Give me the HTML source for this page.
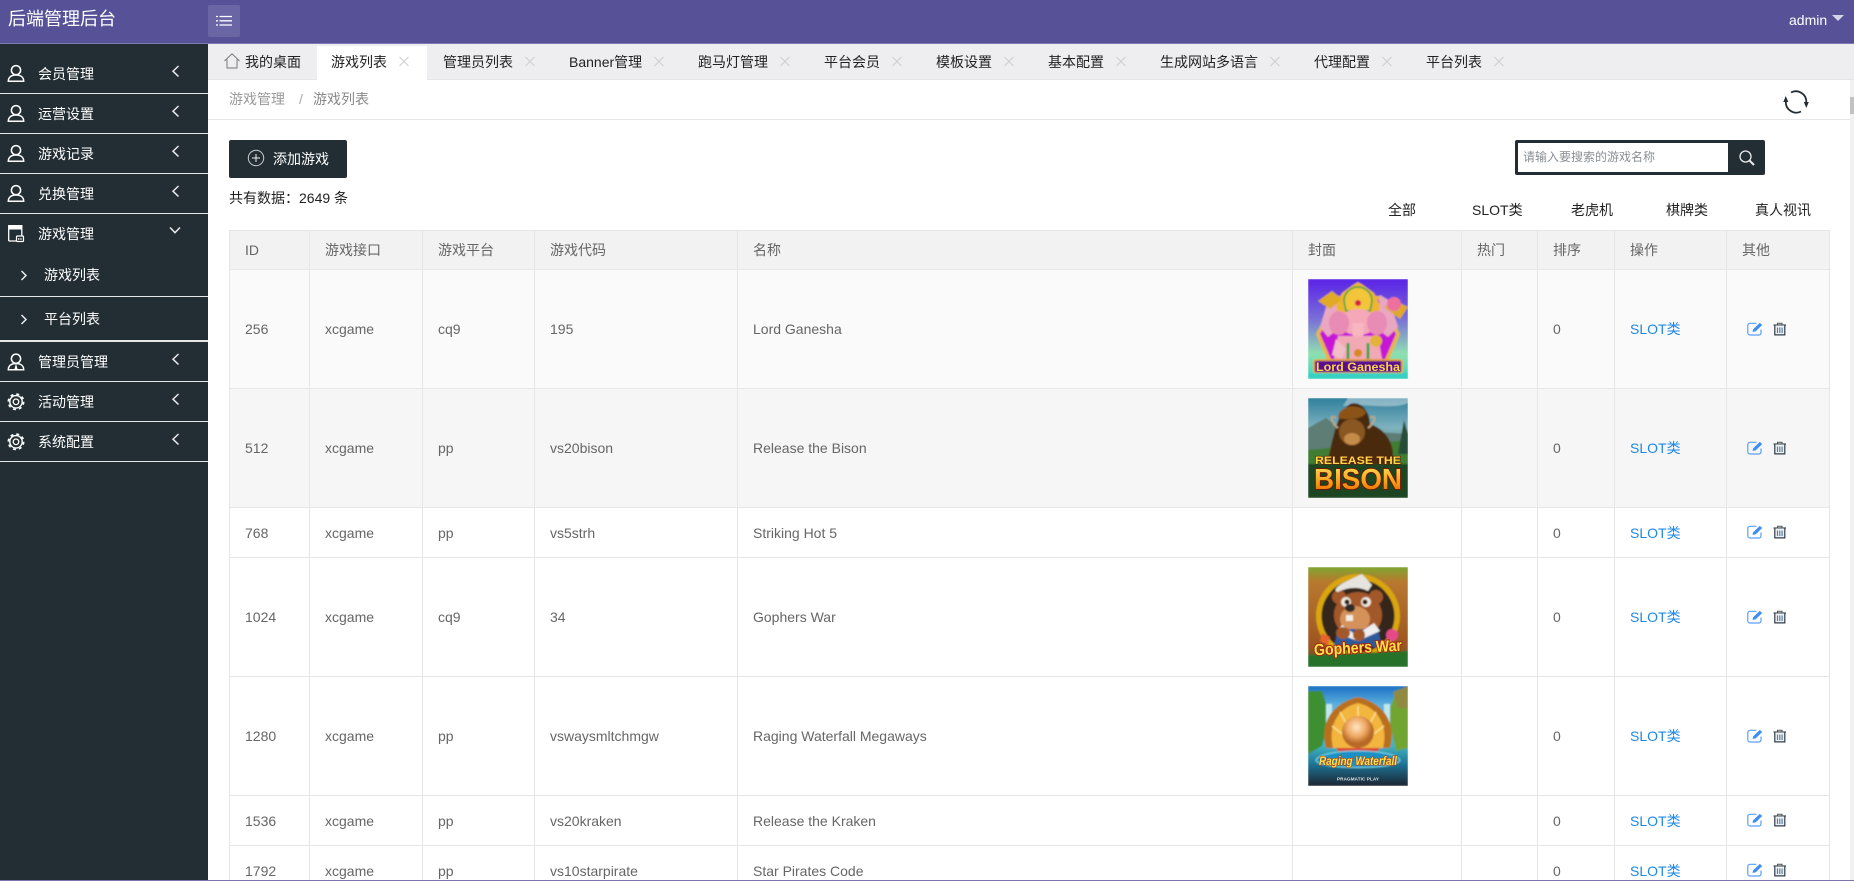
<!DOCTYPE html>
<html lang="zh-CN"><head><meta charset="utf-8"><title>后端管理后台</title>
<style>
*{box-sizing:border-box}
html,body{margin:0;padding:0;width:1854px;height:881px;overflow:hidden;background:#fff}
body{position:relative;font:14px/20px "Liberation Sans","Noto Sans CJK SC",sans-serif;color:#333}
.a{position:absolute;white-space:nowrap}
#top{left:0;top:0;width:1854px;height:44px;background:#575298;border-bottom:1px solid #7d79b4}
#side{left:0;top:44px;width:208px;height:837px;background:#232e34}
.m{position:absolute;left:38px;color:#fff;white-space:nowrap}
.l{position:absolute;left:0;width:208px;height:1px;background:#e4e6e7}
#tabs{left:208px;top:44px;width:1646px;height:36px;background:#eeeef0;border-bottom:1px solid #e4e4e6}
.tt{position:absolute;top:52px;color:#222;white-space:nowrap}
#act{left:317px;top:46px;width:110px;height:35px;background:#fff}
#crumb{left:208px;top:80px;width:1642px;height:40px;border-bottom:1px solid #e6e6e6;background:#fff}
#sb{left:1850px;top:80px;width:4px;height:800px;background:#f1f1f1}
#th{left:1850px;top:97px;width:4px;height:17px;background:#c1c1c1}
#btn{left:229px;top:140px;width:118px;height:38px;background:#232e34;border-radius:2px}
#sea{left:1515px;top:140px;width:250px;height:35px;background:#232e34;border-radius:2px}
#sea i{position:absolute;left:3px;top:3px;width:210px;height:29px;background:#fff;font:12px/29px "Liberation Sans","Noto Sans CJK SC",sans-serif;color:#8a8f94;padding-left:5px;font-style:normal}
#wrap{left:229px;top:230px;width:1601px;height:651px;overflow:hidden}
table{border-collapse:separate;border-spacing:0;table-layout:fixed;width:1601px}
th,td{padding:0 15px;border-right:1px solid #e6e6e6;border-bottom:1px solid #e6e6e6;text-align:left;font-weight:400;color:#666;overflow:hidden;white-space:nowrap}
th:first-child,td:first-child{border-left:1px solid #e6e6e6}
th{background:#f2f2f2;height:40px;border-top:1px solid #e6e6e6}
td{background:#fff}
tr.big td{height:119px}
tr.sm td{height:50px}
tr.r1 td{background:#fafafa}
tr.r2 td{background:#f6f6f6}
td .lk{color:#1e88e5}
td svg.c{display:block;width:100px;height:100px}
td svg.ic{position:relative;top:-1px;display:inline-block;vertical-align:middle}
tr.sm td svg.ic{top:-2px}
.ot{paint-order:stroke}
#bot{left:0;top:880px;width:1854px;height:1px;background:#7a76ad}
</style></head><body>

<div class="a" id="top"></div>
<div class="a" style="left:8px;top:8px;font-size:18px;line-height:22px;color:#fff">后端管理后台</div>
<div class="a" style="left:208px;top:5px;width:32px;height:32px;background:#6a66a6;border-radius:2px"></div>
<svg class="a" style="left:208px;top:5px" width="32" height="32" fill="none" stroke="#fff" stroke-width="1.3"><path d="M11.5 11.5H24M11.5 15.800H24M11.5 20H24"/><path d="M8 11.5H10M8 15.800H10M8 20H10"/></svg>
<div class="a" style="left:1789px;top:10px;color:#fff">admin</div>
<svg class="a" style="left:1832px;top:14px" width="12" height="8"><path d="M0 1H12L6 7z" fill="#d5d3e6"/></svg>

<div class="a" id="side">
 <div class="m" style="top:20px">会员管理</div><div class="l" style="top:49px"></div>
 <div class="m" style="top:60px">运营设置</div><div class="l" style="top:89px"></div>
 <div class="m" style="top:100px">游戏记录</div><div class="l" style="top:129px"></div>
 <div class="m" style="top:140px">兑换管理</div><div class="l" style="top:169px"></div>
 <div class="m" style="top:180px">游戏管理</div>
 <div class="m" style="top:221px;left:44px">游戏列表</div><div class="l" style="top:252px"></div>
 <div class="m" style="top:265px;left:44px">平台列表</div><div class="l" style="top:296px;height:2px"></div>
 <div class="m" style="top:308px">管理员管理</div><div class="l" style="top:337px"></div>
 <div class="m" style="top:348px">活动管理</div><div class="l" style="top:377px"></div>
 <div class="m" style="top:388px">系统配置</div><div class="l" style="top:417px"></div>
</div>
<svg class="a" style="left:0;top:0" width="208" height="470" fill="none" stroke="#fff" stroke-width="1.5">
 <defs>
  <g id="u"><circle cx="8.500" cy="5.200" r="4.600"/><path d="M.8 16.200c0-3.800 2.800-6.200 7.700-6.200s7.700 2.400 7.700 6.200z"/></g>
  <g id="g"><circle cx="9" cy="8.300" r="6.200" stroke-width="1.400"/><circle cx="9" cy="8.300" r="7.700" stroke-width="1.600" stroke-dasharray="3 3.050"/><circle cx="9" cy="8.300" r="2.800" stroke-width="1.300"/></g>
  <path id="cl" d="M6.500 1L1 6.200 6.500 11.500" stroke="#e8eaeb" stroke-width="1.500"/>
 </defs>
 <use href="#u" x="7.500" y="65"/><use href="#u" x="7.500" y="105"/><use href="#u" x="7.500" y="145"/><use href="#u" x="7.500" y="185"/>
 <use href="#cl" x="172" y="65"/><use href="#cl" x="172" y="105"/><use href="#cl" x="172" y="145"/><use href="#cl" x="172" y="185"/>
 <path d="M170 227.500L175 232.700 180 227.500" stroke="#e8eaeb" stroke-width="1.500"/>
 <path d="M8.700 241V225.700H21.800V236M8.700 241H16" stroke-width="1.300"/><rect x="9" y="226" width="12.500" height="3.500" fill="#fff" stroke="none"/><rect x="16.500" y="236" width="7" height="5.500" rx="1" stroke-width="1.200"/><path d="M18.800 238v2M21 238v2" stroke-width="1"/>
 <path d="M21.500 271L26 275.500 21.500 280M21.500 315L26 319.500 21.500 324" stroke="#e8eaeb" stroke-width="1.500"/>
 <use href="#u" x="7.500" y="353.500"/><path d="M16 363.500l-1.800 6.500h3.600z" fill="#fff" stroke="none"/>
 <use href="#cl" x="172" y="353"/><use href="#cl" x="172" y="393"/><use href="#cl" x="172" y="433"/>
 <use href="#g" x="7" y="393.500"/><use href="#g" x="7" y="433.500"/>
</svg>

<div class="a" id="tabs"></div>
<div class="a" id="act"></div>
<svg class="a" style="left:224px;top:53px" width="16" height="16" fill="none" stroke="#777" stroke-width="1"><path d="M.5 8L8 .8 15.500 8M3 6.500V15H13V6.500"/></svg>
<div class="tt" style="left:245px">我的桌面</div>
<div class="tt" style="left:331px">游戏列表</div>
<div class="tt" style="left:443px">管理员列表</div>
<div class="tt" style="left:569px">Banner管理</div>
<div class="tt" style="left:698px">跑马灯管理</div>
<div class="tt" style="left:824px">平台会员</div>
<div class="tt" style="left:936px">模板设置</div>
<div class="tt" style="left:1048px">基本配置</div>
<div class="tt" style="left:1160px">生成网站多语言</div>
<div class="tt" style="left:1314px">代理配置</div>
<div class="tt" style="left:1426px">平台列表</div>
<svg class="a" style="left:0;top:50px" width="1520" height="24" fill="none" stroke="#cfcfd2" stroke-width="1.100">
 <defs><path id="xx" d="M0 0L9 9M9 0L0 9"/></defs>
 <use href="#xx" x="399.500" y="7"/><use href="#xx" x="525.500" y="7"/><use href="#xx" x="654.500" y="7"/><use href="#xx" x="780.500" y="7"/><use href="#xx" x="892.500" y="7"/><use href="#xx" x="1004.500" y="7"/><use href="#xx" x="1116.500" y="7"/><use href="#xx" x="1270.500" y="7"/><use href="#xx" x="1382.500" y="7"/><use href="#xx" x="1494.500" y="7"/>
</svg>

<div class="a" id="crumb"></div>
<div class="a" style="left:229px;top:89px;color:#999">游戏管理</div>
<div class="a" style="left:299px;top:89px;color:#aaa">/</div>
<div class="a" style="left:313px;top:89px;color:#888">游戏列表</div>
<svg class="a" style="left:1783px;top:88px" width="26" height="28" fill="none" stroke="#232e34" stroke-width="1.800">
 <path d="M8 4.500A10.500 10.500 0 0 1 23.300 14.500"/><path d="M18 23.500A10.500 10.500 0 0 1 2.800 13.500"/><path d="M20.800 14L23.300 20 25.800 14zM.3 14L2.800 8 5.300 14z" fill="#232e34" stroke="none"/>
</svg>
<div class="a" id="sb"></div><div class="a" id="th"></div>

<div class="a" id="btn"></div>
<svg class="a" style="left:247px;top:149px" width="18" height="18" fill="none" stroke="#c9cfd1" stroke-width="1"><circle cx="9" cy="9" r="7.700"/><path d="M9 5V13M5 9H13" stroke="#eee"/></svg>
<div class="a" style="left:273px;top:149px;color:#fff">添加游戏</div>
<div class="a" style="left:229px;top:188px;color:#222">共有数据：2649 条</div>

<div class="a" id="sea"><i>请输入要搜索的游戏名称</i></div>
<svg class="a" style="left:1738px;top:149px" width="18" height="18" fill="none" stroke="#e8eaeb" stroke-width="1.300"><circle cx="7.500" cy="7.500" r="5.500"/><path d="M11.500 11.500L16 16" stroke-width="2"/></svg>

<div class="a" style="left:1388px;top:200px;color:#222">全部</div>
<div class="a" style="left:1472px;top:200px;color:#222">SLOT类</div>
<div class="a" style="left:1571px;top:200px;color:#222">老虎机</div>
<div class="a" style="left:1666px;top:200px;color:#222">棋牌类</div>
<div class="a" style="left:1755px;top:200px;color:#222">真人视讯</div>

<svg width="0" height="0" style="position:absolute"><defs>
 <g id="edit"><path d="M9.500 1.300H3A2.200 2.200 0 0 0 .8 3.500V10.800A2.200 2.200 0 0 0 3 13H12A2.200 2.200 0 0 0 14 10.800V7.500" fill="none" stroke="#5aa0f5" stroke-width="1.200"/><path d="M5.500 9.900L6.200 7.300 12.800.9 15.200 3 8.600 9.400z" fill="#3d8ef2"/></g>
 <g id="trash"><path d="M4.500 2.800V1.300H9V2.800" fill="none" stroke="#555" stroke-width="1"/><path d="M.5 3H13" stroke="#3f4a55" stroke-width="1.200"/><path d="M1.800 3.500V12.900H11.800V3.500" fill="#eef2f5" stroke="#2f3c4a" stroke-width="1.200"/><path d="M4.500 5.500V11M6.800 5.500V11M9.100 5.500V11" stroke="#5f7f99" stroke-width="1.200"/></g>
</defs></svg>

<div class="a" id="wrap">
<table>
<colgroup><col style="width:81px"><col style="width:113px"><col style="width:112px"><col style="width:203px"><col style="width:555px"><col style="width:169px"><col style="width:76px"><col style="width:77px"><col style="width:112px"><col style="width:103px"></colgroup>
<thead><tr><th>ID</th><th>游戏接口</th><th>游戏平台</th><th>游戏代码</th><th>名称</th><th>封面</th><th>热门</th><th>排序</th><th>操作</th><th>其他</th></tr></thead>
<tbody>
<tr class="big r1"><td>256</td><td>xcgame</td><td>cq9</td><td>195</td><td>Lord Ganesha</td><td>
<svg class="c" viewBox="0 0 100 100"><defs><linearGradient id="a1" x1="0" y1="0" x2="0" y2="1"><stop offset="0" stop-color="#5a22e6"/><stop offset=".4" stop-color="#7a6fd8"/><stop offset=".75" stop-color="#8fe0b0"/><stop offset="1" stop-color="#35d5c0"/></linearGradient><filter id="b1"><feGaussianBlur stdDeviation=".7"/></filter></defs>
<g filter="url(#b1)"><rect width="100" height="100" fill="url(#a1)"/>
<path d="M27 17H73L92 55 78 88H22L8 55z" fill="#e8b545"/><path d="M30 20H70L88 55 75 85H25L12 55z" fill="#c616d6"/>
<path d="M28 16L20 22 12 48 20 58 30 50zM72 16L82 22 90 48 80 58 70 50z" fill="#e9a7c2"/>
<path d="M45 6L50 3 55 6 66 14 72 26 70 40H30L28 26 34 14z" fill="#eeb52e"/><path d="M36 22A14 14 0 0 1 64 22L62 32H38z" fill="#f2c53a" stroke="#17a04a" stroke-width="1.500"/><circle cx="50" cy="24" r="3" fill="#d81b4a"/>
<ellipse cx="50" cy="43" rx="19" ry="13" fill="#f5a8b8"/><ellipse cx="31" cy="44" rx="10" ry="12" fill="#e88bb5"/><ellipse cx="69" cy="44" rx="10" ry="12" fill="#e88bb5"/><path d="M44 44H56L55 64 60 70 50 70 45 62z" fill="#f7b6c0"/>
<path d="M30 57H70L74 80H26z" fill="#f2a9b6"/>
<path d="M10 22L24 12 34 20 22 30zM88 22L100 28 92 40 76 28z" fill="#e0a927"/><circle cx="86" cy="25" r="7" fill="#ee6f9f"/><path d="M40 64v16M60 64v16" stroke="#2ea84a" stroke-width="3"/><circle cx="50" cy="74" r="4" fill="#d88a1a"/><circle cx="68" cy="62" r="6" fill="#e3b23a"/><path d="M28 60L38 70 34 80 24 76z" fill="#f0bdc8"/>
<rect x="6" y="81" width="88" height="13" rx="2" fill="#5a108f" stroke="#efa90f" stroke-width="1.800"/><rect y="94" width="100" height="6" fill="#35d2c2"/></g>
<text x="50" y="91.800" text-anchor="middle" font-family="Liberation Sans" font-weight="700" font-size="12" fill="#f8d545" textLength="84" lengthAdjust="spacingAndGlyphs">Lord Ganesha</text></svg>
</td><td></td><td>0</td><td><span class="lk">SLOT类</span></td><td><span style="margin-left:5px"></span><svg class="ic" width="16" height="14"><use href="#edit"/></svg><svg class="ic" style="margin-left:10px" width="14" height="14"><use href="#trash"/></svg></td></tr>

<tr class="big r2"><td>512</td><td>xcgame</td><td>pp</td><td>vs20bison</td><td>Release the Bison</td><td>
<svg class="c" viewBox="0 0 100 100"><defs><linearGradient id="a2" x1="0" y1="0" x2="0" y2="1"><stop offset="0" stop-color="#2f7f9d"/><stop offset=".3" stop-color="#7fb3bf"/><stop offset=".5" stop-color="#5b8a6f"/><stop offset="1" stop-color="#1f4a22"/></linearGradient><filter id="b2"><feGaussianBlur stdDeviation=".8"/></filter><linearGradient id="t2" x1="0" y1="0" x2="0" y2="1"><stop offset="0" stop-color="#ffe25a"/><stop offset=".6" stop-color="#f79a12"/><stop offset="1" stop-color="#e0540c"/></linearGradient></defs>
<g filter="url(#b2)"><rect width="100" height="100" fill="url(#a2)"/><path d="M35 8C60 5 85 12 100 5V0H40z" fill="#d9e6ea" opacity=".5"/>
<path d="M0 30L18 20 35 32 100 36V60H0z" fill="#5d7d75"/><path d="M0 52L100 42V66H0z" fill="#3f7d32"/><path d="M96 22l4 14v20h-10z" fill="#274d38"/>
<path d="M20 62C26 34 30 14 42 6 54 2 62 15 62 26 80 32 86 48 85 60L80 68H24z" fill="#4a2a10"/><path d="M30 20C30 8 50 4 58 14 56 22 36 22 30 20z" fill="#8c5218"/>
<path d="M28 20C20 15 24 26 30 30M62 20C70 15 66 26 60 30" stroke="#b9a788" stroke-width="2" fill="none"/><ellipse cx="44" cy="34" rx="13" ry="13" fill="#8a5622"/><ellipse cx="44" cy="41" rx="8" ry="6" fill="#c48b49"/>
<path d="M0 66H100V100H0z" fill="#1c4420"/></g>
<text class="ot" x="50" y="66" text-anchor="middle" font-family="Liberation Sans" font-weight="700" font-size="11" fill="#fbd94a" stroke="#5c1d05" stroke-width="1.200" textLength="86" lengthAdjust="spacingAndGlyphs">RELEASE THE</text>
<text class="ot" x="50" y="91" text-anchor="middle" font-family="Liberation Sans" font-weight="700" font-size="29" fill="url(#t2)" stroke="#6b1a05" stroke-width="2" textLength="88" lengthAdjust="spacingAndGlyphs">BISON</text></svg>
</td><td></td><td>0</td><td><span class="lk">SLOT类</span></td><td><span style="margin-left:5px"></span><svg class="ic" width="16" height="14"><use href="#edit"/></svg><svg class="ic" style="margin-left:10px" width="14" height="14"><use href="#trash"/></svg></td></tr>

<tr class="sm"><td>768</td><td>xcgame</td><td>pp</td><td>vs5strh</td><td>Striking Hot 5</td><td></td><td></td><td>0</td><td><span class="lk">SLOT类</span></td><td><span style="margin-left:5px"></span><svg class="ic" width="16" height="14"><use href="#edit"/></svg><svg class="ic" style="margin-left:10px" width="14" height="14"><use href="#trash"/></svg></td></tr>

<tr class="big"><td>1024</td><td>xcgame</td><td>cq9</td><td>34</td><td>Gophers War</td><td>
<svg class="c" viewBox="0 0 100 100"><defs><filter id="b3"><feGaussianBlur stdDeviation=".7"/></filter><linearGradient id="a3" x1="0" y1="0" x2="0" y2="1"><stop offset="0" stop-color="#7ea52c"/><stop offset=".15" stop-color="#b8782f"/><stop offset=".8" stop-color="#9b5420"/><stop offset="1" stop-color="#1f6a2a"/></linearGradient></defs>
<g filter="url(#b3)"><rect width="100" height="100" fill="url(#a3)"/>
<circle cx="50" cy="49" r="42" fill="#d9a60d"/><circle cx="50" cy="49" r="36.500" fill="#36261c"/>
<ellipse cx="50" cy="48" rx="24" ry="23" fill="#a3592a"/><circle cx="31" cy="30" r="7" fill="#a3592a"/><circle cx="68" cy="30" r="7" fill="#a3592a"/><ellipse cx="47" cy="52" rx="15" ry="13" fill="#d4915a"/>
<circle cx="38" cy="35" r="5" fill="#efe7dc"/><circle cx="58" cy="35" r="5" fill="#efe7dc"/><circle cx="39" cy="35" r="2.500" fill="#2a1d14"/><circle cx="57" cy="35" r="2.500" fill="#2a1d14"/><ellipse cx="42" cy="41" rx="5" ry="4" fill="#2e2a28"/><rect x="38" y="48" width="7" height="6" fill="#f4efe3"/>
<path d="M37 15L54 7 64 18 60 24C48 18 36 22 30 25 24 24 30 18 37 15z" fill="#e6e4df"/><path d="M30 62L70 62 74 80H26z" fill="#2f5a9a"/><path d="M34 58L48 68 66 56 72 64 50 74 28 66z" fill="#efefef"/><ellipse cx="35" cy="66" rx="7" ry="6" fill="#a3592a"/><ellipse cx="51" cy="68" rx="6" ry="6" fill="#a3592a"/>
<path d="M14 66l8 4-2 8-8-4z" fill="#e8632a"/><circle cx="84" cy="68" r="6" fill="#e64a8a"/><path d="M0 88L100 84V100H0z" fill="#25722c"/></g>
<text class="ot" x="50" y="86" text-anchor="middle" font-family="Liberation Sans" font-weight="700" font-size="16" fill="#fbe24a" stroke="#a3220e" stroke-width="2" textLength="88" lengthAdjust="spacingAndGlyphs" transform="rotate(-3 50 82)">Gophers War</text></svg>
</td><td></td><td>0</td><td><span class="lk">SLOT类</span></td><td><span style="margin-left:5px"></span><svg class="ic" width="16" height="14"><use href="#edit"/></svg><svg class="ic" style="margin-left:10px" width="14" height="14"><use href="#trash"/></svg></td></tr>

<tr class="big"><td>1280</td><td>xcgame</td><td>pp</td><td>vswaysmltchmgw</td><td>Raging Waterfall Megaways</td><td>
<svg class="c" viewBox="0 0 100 100"><defs><filter id="b4"><feGaussianBlur stdDeviation=".7"/></filter><linearGradient id="a4" x1="0" y1="0" x2="0" y2="1"><stop offset="0" stop-color="#1b6fc4"/><stop offset=".2" stop-color="#5fb4e0"/><stop offset=".6" stop-color="#3fb3c4"/><stop offset=".8" stop-color="#1c6d8e"/><stop offset="1" stop-color="#1a2430"/></linearGradient><radialGradient id="p4" cx=".45" cy=".35"><stop offset="0" stop-color="#ffe6c4"/><stop offset=".6" stop-color="#efa863"/><stop offset="1" stop-color="#b76a28"/></radialGradient></defs>
<g filter="url(#b4)"><rect width="100" height="100" fill="url(#a4)"/>
<path d="M0 5H14L22 30 14 60 0 68z" fill="#3e8f33"/><path d="M100 5H88L80 28 88 65 100 62z" fill="#72a433"/><path d="M85 6L100 0V22H90z" fill="#8f8a3f"/>
<path d="M18 18H24V60H18zM76 18H82V60H76z" fill="#bfe7ef"/>
<path d="M18 62C12 42 20 18 50 11 80 18 88 42 82 62z" fill="#b9701f"/><path d="M25 62C20 42 28 22 50 17 72 22 80 42 75 62z" fill="#f2b53d"/>
<g stroke="#fbe08e" stroke-width="1.500"><path d="M50 60V20M50 60L32 26M50 60L68 26M50 60L24 40M50 60L76 40"/></g>
<circle cx="50" cy="46" r="16" fill="url(#p4)"/><path d="M28 62H72L68 68H32z" fill="#d8453a"/><path d="M8 74C14 62 86 62 92 74 92 84 8 84 8 74z" fill="#1c8fc4" stroke="#7fdbea" stroke-width="1"/></g>
<text class="ot" x="50" y="79" text-anchor="middle" font-family="Liberation Sans" font-weight="700" font-style="italic" font-size="12" fill="#fbe254" stroke="#a8430e" stroke-width="1.200" textLength="78" lengthAdjust="spacingAndGlyphs">Raging Waterfall</text>
<text x="50" y="94.500" text-anchor="middle" font-family="Liberation Sans" font-weight="700" font-size="4.600" fill="#e3e6e8" textLength="42">PRAGMATIC PLAY</text></svg>
</td><td></td><td>0</td><td><span class="lk">SLOT类</span></td><td><span style="margin-left:5px"></span><svg class="ic" width="16" height="14"><use href="#edit"/></svg><svg class="ic" style="margin-left:10px" width="14" height="14"><use href="#trash"/></svg></td></tr>

<tr class="sm"><td>1536</td><td>xcgame</td><td>pp</td><td>vs20kraken</td><td>Release the Kraken</td><td></td><td></td><td>0</td><td><span class="lk">SLOT类</span></td><td><span style="margin-left:5px"></span><svg class="ic" width="16" height="14"><use href="#edit"/></svg><svg class="ic" style="margin-left:10px" width="14" height="14"><use href="#trash"/></svg></td></tr>

<tr class="sm"><td>1792</td><td>xcgame</td><td>pp</td><td>vs10starpirate</td><td>Star Pirates Code</td><td></td><td></td><td>0</td><td><span class="lk">SLOT类</span></td><td><span style="margin-left:5px"></span><svg class="ic" width="16" height="14"><use href="#edit"/></svg><svg class="ic" style="margin-left:10px" width="14" height="14"><use href="#trash"/></svg></td></tr>
</tbody></table>
</div>
<div class="a" id="bot"></div>
</body></html>
